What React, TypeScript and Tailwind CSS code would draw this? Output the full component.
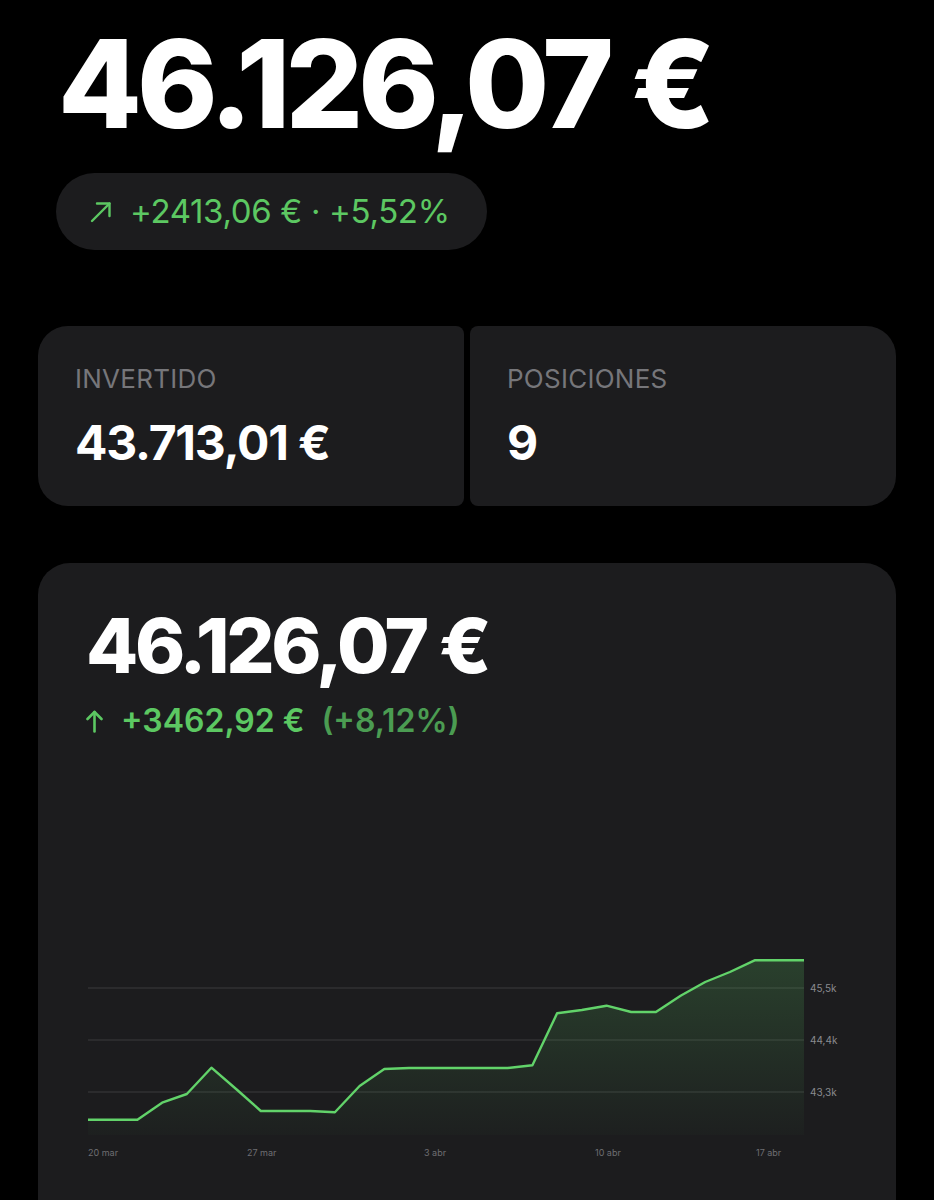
import React from 'react';

const points: [number, number][] = [
  [0, 1119.7], [1, 1119.7], [2, 1119.7], [3, 1102.7], [4, 1094], [5, 1067.7],
  [6, 1089], [7, 1111], [8, 1111], [9, 1111], [10, 1112.3], [11, 1086],
  [12, 1069], [13, 1068], [14, 1068], [15, 1068], [16, 1068], [17, 1068],
  [18, 1065.3], [19, 1013.3], [20, 1010], [21, 1005.7], [22, 1012], [23, 1012],
  [24, 995.7], [25, 982], [26, 972], [27, 960.3], [28, 960.3], [29, 960.3],
];

// card starts at x=38, svg starts at y=940 on the page
const toX = (i: number) => 50 + i * (716 / 29);
const toY = (y: number) => y - 940;

const ArrowUpRight = () => (
  <svg width="22" height="22" viewBox="0 0 22 22" fill="none" stroke="currentColor" strokeWidth="2.4" strokeLinecap="round" strokeLinejoin="round">
    <path d="M2 20 L19.5 2.5" />
    <path d="M7 2.5 H19.5 V15" />
  </svg>
);

const ArrowUp = () => (
  <svg width="17" height="23" viewBox="0 0 17 23" fill="none" stroke="currentColor" strokeWidth="2.6" strokeLinecap="round" strokeLinejoin="round">
    <path d="M8.5 21.5 V2" />
    <path d="M1.5 9 L8.5 2 L15.5 9" />
  </svg>
);

const StatCard = ({ label, value, side }: { label: string; value: string; side: 'left' | 'right' }) => (
  <div
    className={`bg-[#1c1c1e] h-[180px] pl-[37px] pt-[40px] ${
      side === 'left'
        ? 'rounded-l-[30px] rounded-r-[8px]'
        : 'rounded-r-[30px] rounded-l-[8px]'
    }`}
  >
    <div className="text-[26px] leading-none text-[#76767a] tracking-[0.01em]">{label}</div>
    <div className="mt-[27px] text-[48px] leading-none font-bold text-white tracking-[-0.025em]">{value}</div>
  </div>
);

const Chart = () => {
  const line = points.map(([i, y]) => `${toX(i).toFixed(1)},${toY(y).toFixed(1)}`).join(' ');
  const area = `${toX(0)},195 ${line} ${toX(29)},195`;
  const grid = [48, 100, 152];
  const yLabels = ['45,5k', '44,4k', '43,3k'];
  const xLabels: [number, string][] = [
    [50, '20 mar'],
    [209, '27 mar'],
    [386, '3 abr'],
    [557, '10 abr'],
    [718, '17 abr'],
  ];
  return (
    <svg width="858" height="240" viewBox="0 0 858 240" className="block">
      <defs>
        <linearGradient id="fill" x1="0" y1="20" x2="0" y2="195" gradientUnits="userSpaceOnUse">
          <stop offset="0" stopColor="#5fd068" stopOpacity="0.2" />
          <stop offset="1" stopColor="#5fd068" stopOpacity="0.02" />
        </linearGradient>
      </defs>
      {grid.map((g) => (
        <line key={g} x1="50" x2="766" y1={g} y2={g} stroke="#3a3a3c" strokeWidth="1" />
      ))}
      <polygon points={area} fill="url(#fill)" />
      <polyline points={line} fill="none" stroke="#62d36a" strokeWidth="2.4" strokeLinejoin="round" />
      {grid.map((g, i) => (
        <text key={g} x="772" y={g + 4} fontSize="10" fill="#8a8a8e" fontFamily="Inter, sans-serif">
          {yLabels[i]}
        </text>
      ))}
      {xLabels.map(([x, t]) => (
        <text key={t} x={x} y="216" fontSize="9" fill="#6e6e72" fontFamily="Inter, sans-serif">
          {t}
        </text>
      ))}
    </svg>
  );
};

export default function App() {
  return (
    <div className="h-[1200px] overflow-hidden bg-black font-['Inter',sans-serif]">
      <div className="pl-[58px] pt-[23px]">
        <h1 className="text-[122px] leading-none font-extrabold text-white tracking-[-0.04em]">
          46.126,07 €
        </h1>
      </div>

      <div className="ml-[56px] mt-[28px] inline-flex h-[77px] items-center gap-[18px] rounded-full bg-[#1c1c1e] pl-[34px] pr-[37px] text-[33px] text-[#5cc862]">
        <ArrowUpRight />
        <span className="tracking-[-0.01em]">+2413,06 € · +5,52%</span>
      </div>

      <div className="mx-[38px] mt-[76px] grid grid-cols-2 gap-[6px]">
        <StatCard side="left" label="INVERTIDO" value="43.713,01 €" />
        <StatCard side="right" label="POSICIONES" value="9" />
      </div>

      <div className="mx-[38px] mt-[57px] h-[700px] rounded-t-[32px] bg-[#1c1c1e]">
        <div className="h-[377px] pl-[48px] pt-[44px]">
          <div className="text-[76px] leading-none font-extrabold text-white tracking-[-0.045em]">46.126,07 €</div>
          <div className="mt-[22px] flex items-center text-[32px] leading-none font-semibold text-[#5cc862]">
            <ArrowUp />
            <span className="ml-[18px]">+3462,92 €</span>
            <span className="ml-[17px] text-[#4b9c52]">(+8,12%)</span>
          </div>
        </div>
        <Chart />
      </div>
    </div>
  );
}
